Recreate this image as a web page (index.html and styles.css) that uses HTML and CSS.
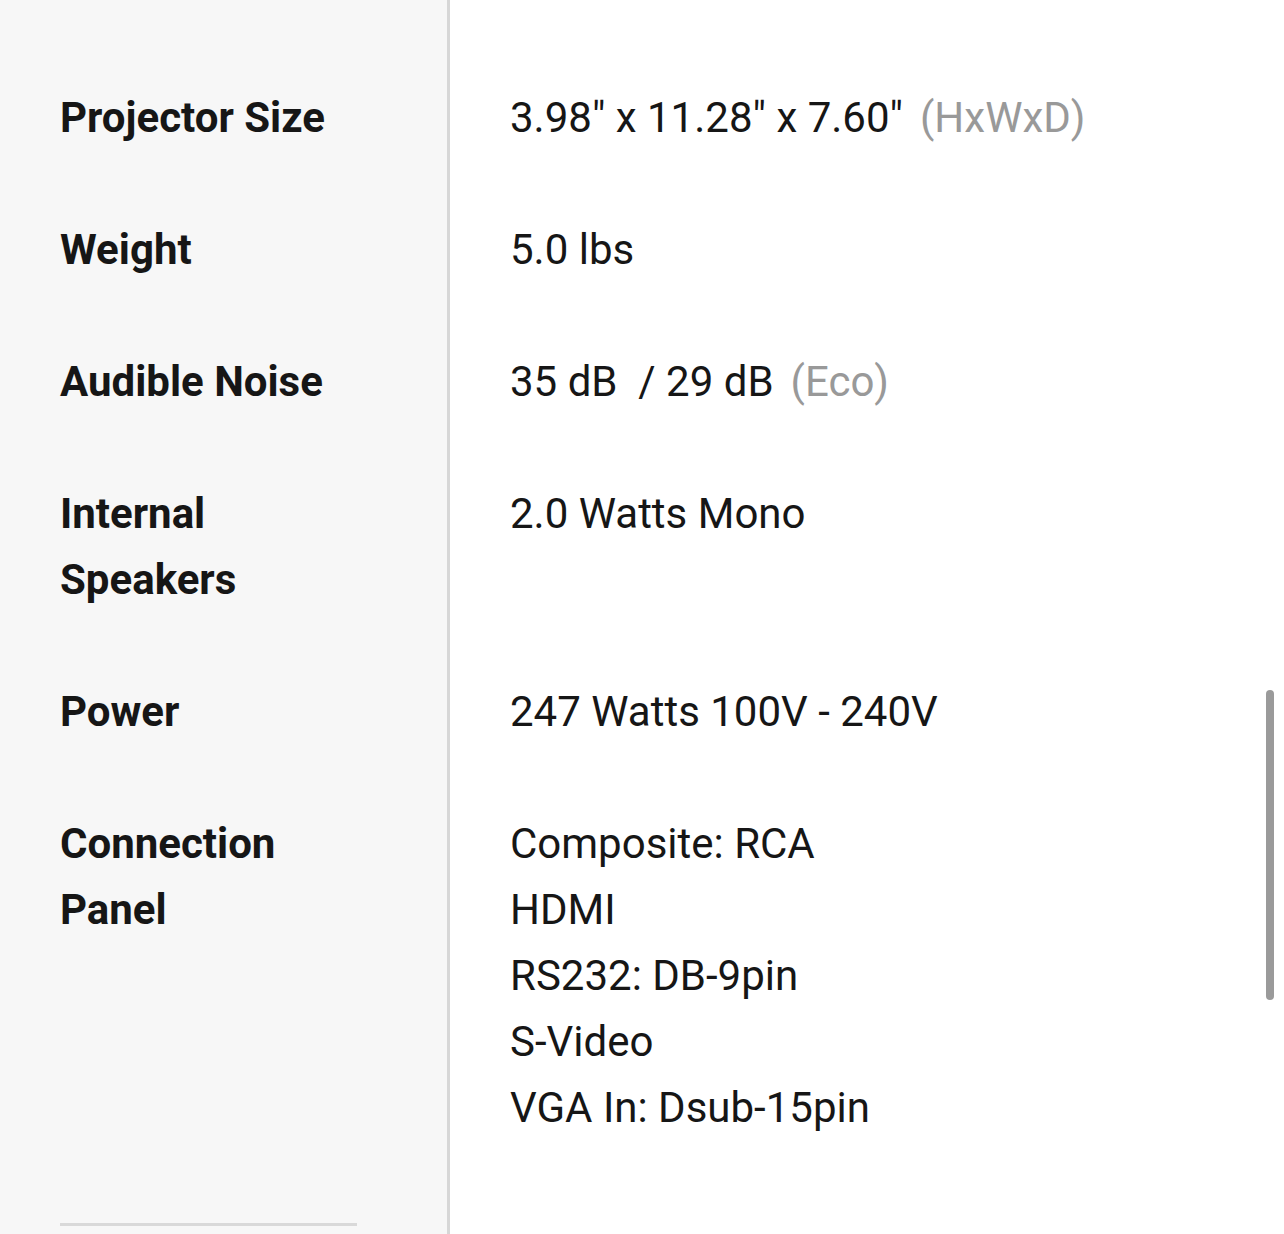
FILE: index.html
```html
<!DOCTYPE html>
<html lang="en">
<head>
<meta charset="utf-8">
<title>Specifications</title>
<link rel="stylesheet" href="styles.css">
</head>
<body>
<div class="specs">
  <div class="label spacer"></div><div class="value spacer"></div>

  <div class="label">Projector Size</div>
  <div class="value">3.98" x 11.28" x 7.60"<span class="note">(HxWxD)</span></div>

  <div class="label">Weight</div>
  <div class="value">5.0 lbs</div>

  <div class="label">Audible Noise</div>
  <div class="value">35 dB&nbsp; / 29 dB<span class="note">(Eco)</span></div>

  <div class="label">Internal Speakers</div>
  <div class="value">2.0 Watts Mono</div>

  <div class="label">Power</div>
  <div class="value">247 Watts 100V - 240V</div>

  <div class="label">Connection Panel</div>
  <div class="value">Composite: RCA<br>HDMI<br>RS232: DB-9pin<br>S-Video<br>VGA In: Dsub-15pin</div>

  <div class="label footer"><div class="rule"></div></div><div class="value footer"></div>
</div>
<div class="scrollbar"></div>
</body>
</html>
```
FILE: styles.css
```css
html, body {
  margin: 0;
  padding: 0;
  background: #ffffff;
  overflow: hidden;
}

body {
  font-family: Roboto, "Liberation Sans", sans-serif;
  font-size: 42px;
  line-height: 66px;
  color: #161616;
}

.specs {
  display: grid;
  grid-template-columns: 450px 1fr;
}

.label {
  box-sizing: border-box;
  background: #f7f7f7;
  border-right: 3px solid #d7d7d7;
  padding: 33px 100px 33px 60px;
  font-weight: 700;
}

.value {
  padding: 33px 40px 33px 60px;
  font-weight: 400;
}

.spacer {
  padding: 0;
  height: 52px;
}

.note {
  color: #999999;
  margin-left: 17px;
}

.footer {
  padding-top: 49px;
  padding-bottom: 80px;
}

.label.footer {
  padding-right: 90px;
  padding-left: 60px;
}

.rule {
  width: 297px;
  height: 3px;
  background: #d9d9d9;
}

.scrollbar {
  position: fixed;
  top: 690px;
  right: 10px;
  width: 8px;
  height: 310px;
  border-radius: 4px;
  background: #9a9a9a;
}
```
